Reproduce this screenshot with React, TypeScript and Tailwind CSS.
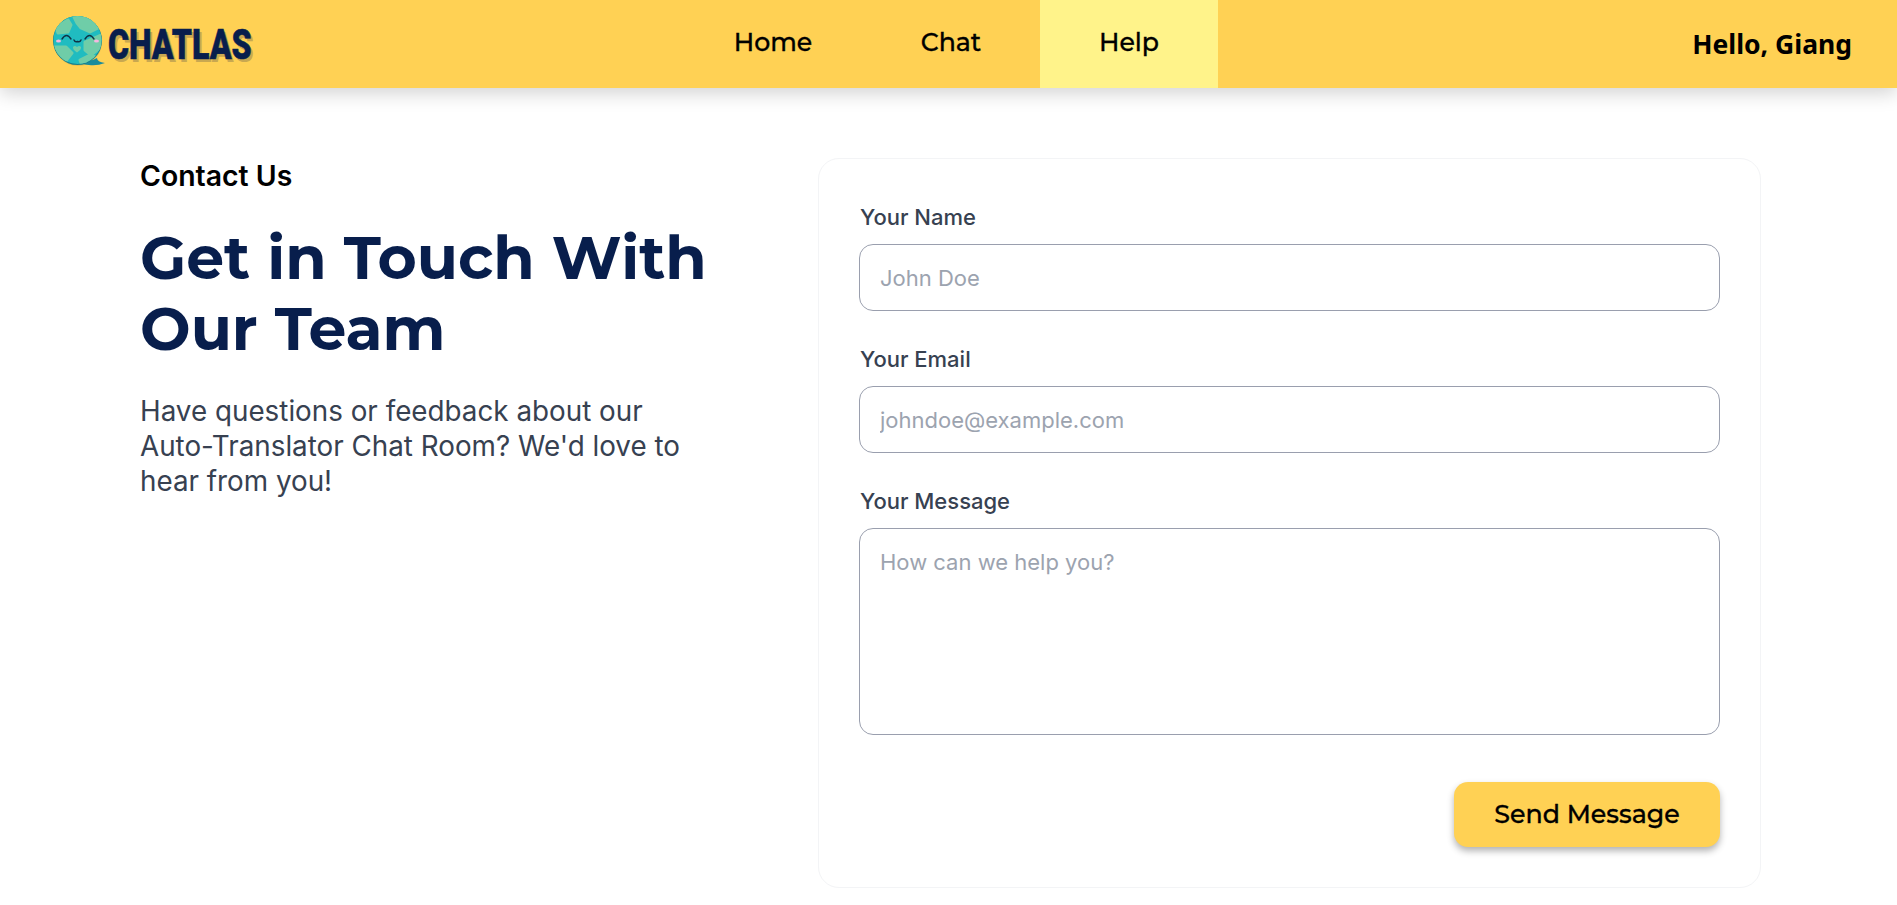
const mont = "font-['Montserrat','Inter',sans-serif]";

function Logo() {
  return (
    <div className="flex items-center">
      <svg width="54" height="54" viewBox="0 0 54 54" className="shrink-0 -mt-[2px]">
        <defs>
          <clipPath id="globe"><circle cx="24.500" cy="24" r="24" /></clipPath>
        </defs>
        <ellipse cx="25" cy="26" rx="24" ry="24" fill="#d9b24a" opacity="0.6" />
        <path d="M30 44 Q38 46 44 42 Q44 46 52 47 Q44 50 36 49 Q30 49 27 46Z" fill="#1a8b9c" />
        <circle cx="24.500" cy="24.500" r="24.500" fill="#17808f" />
        <g clipPath="url(#globe)">
          <circle cx="24.500" cy="23.500" r="24.500" fill="#20bcc0" />
          <g fill="#6fcda8" stroke="#6fcda8" strokeWidth="3" strokeLinejoin="round">
            <path d="M21 1 L37 1 L45 12 L37 16 L28 12 L24 7Z" />
            <path d="M3 11 L15 4 L18 9 L15 16 L5 17Z" />
            <path d="M32 26 L48 19 L48 31 L38 39 L32 34Z" />
            <path d="M2 31 L13 31 L19 37 L12 46 L5 41Z" />
            <path d="M27 44 L37 39 L45 42 L38 48 L28 47Z" />
          </g>
        </g>
        <path d="M24 36.500 q-4.500 -3 -4 -5.500 q1.800 -2.200 4 0 q2.200 -2.200 4 0 q.5 2.500 -4 5.500z" fill="#6fcda8" />
        <g fill="none" stroke="#0f3345" strokeWidth="1.400" strokeLinecap="round">
          <path d="M9 23 q4.500 -7 9 0" />
          <path d="M32 23 q4.500 -7 9 0" />
          <path d="M21 24 q1 2.500 3.500 1.500 q2.500 1 3.500 -1.500" />
        </g>
        <ellipse cx="5.500" cy="25" rx="2.500" ry="1.500" fill="#f4b8e0" />
        <ellipse cx="43.500" cy="25" rx="2.500" ry="1.500" fill="#f4b8e0" />
      </svg>
      <span className="ml-[1px] font-['Roboto',sans-serif] font-black text-[43px] leading-none text-[#081e4c] [-webkit-text-stroke:0.6px_#081e4c] [text-shadow:3px_3px_0_#c9a850] scale-x-[0.745] origin-left">
        CHATLAS
      </span>
    </div>
  );
}

function NavItem({ label, active }: { label: string; active?: boolean }) {
  return (
    <a className={`w-[178px] h-full flex items-center justify-center pb-[2px] text-[25.200px] font-medium [-webkit-text-stroke:0.3px_black] text-black ${mont} ${active ? "bg-[#fff38a]" : ""}`}>
      {label}
    </a>
  );
}

function Field({ label, placeholder }: { label: string; placeholder: string }) {
  return (
    <div className="mb-[32px]">
      <label className="block mb-[11px] pl-[1px] text-[22px] leading-[32px] font-medium text-[#374151]">{label}</label>
      <input
        placeholder={placeholder}
        className="block w-full h-[67px] px-5 rounded-[14px] border border-[#9a9fae] bg-white text-[22px] placeholder:text-[#9ca3af]"
      />
    </div>
  );
}

export default function App() {
  return (
    <div className="min-h-[905px] bg-white font-['Inter',sans-serif]">
      <header className="h-[88px] bg-[#ffd154] shadow-[0_5px_18px_rgba(0,0,0,0.18)] flex items-center pl-[53px] pr-[45px] relative">
        <div className="w-[631px] shrink-0"><Logo /></div>
        <nav className="flex h-full"><NavItem label="Home" /><NavItem label="Chat" /><NavItem label="Help" active /></nav>
        <div className="ml-auto pt-[1px] font-['Noto_Sans',sans-serif] font-bold text-[26.500px] text-black">Hello, Giang</div>
      </header>

      <main className="flex pl-[140px] pt-[70px]">
        <section className="w-[678px] shrink-0">
          <h2 className="text-[28.400px] leading-[36px] font-semibold text-black">Contact Us</h2>
          <h1 className={`mt-[28px] text-[60px] leading-[71px] font-bold text-[#081e4c] ${mont}`}>
            Get in Touch With<br />Our Team
          </h1>
          <p className="mt-[30px] text-[27.800px] leading-[35px] text-[#374151] w-[560px]">
            Have questions or feedback about our Auto-Translator Chat Room? We'd love to hear from you!
          </p>
        </section>
        <form className="w-[943px] h-[730px] rounded-[21px] border border-[#f3f4f6] bg-white px-10 pt-[42px] flex flex-col">
          <Field label="Your Name" placeholder="John Doe" />
          <Field label="Your Email" placeholder="johndoe@example.com" />
          <div>
            <label className="block mb-[11px] pl-[1px] text-[22px] leading-[32px] font-medium text-[#374151]">Your Message</label>
            <textarea
              placeholder="How can we help you?"
              className="block w-full h-[207px] px-5 py-[17px] rounded-[14px] border border-[#9a9fae] bg-white text-[22px] leading-[32px] resize-none placeholder:text-[#9ca3af]"
            />
          </div>
          <div className="flex justify-end mt-[47px]">
            <button type="button" className={`w-[266px] h-[65px] rounded-[14px] bg-[#ffd154] text-[25.300px] font-medium [-webkit-text-stroke:0.3px_black] text-black shadow-[0_4px_7px_rgba(0,0,0,0.3)] ${mont}`}>
              Send Message
            </button>
          </div>
        </form>
      </main>
    </div>
  );
}
